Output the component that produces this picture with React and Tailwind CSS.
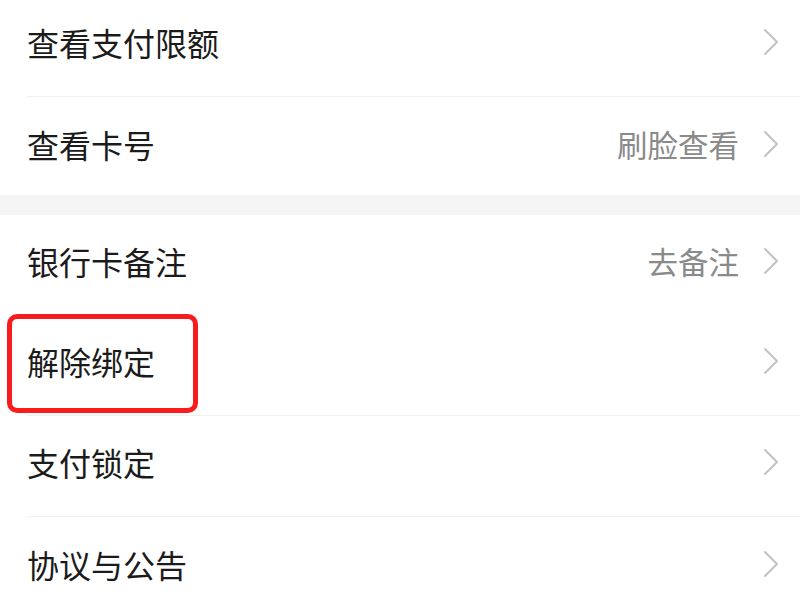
import React from "react";

const Chevron = () => (
  <svg width="18" height="28" viewBox="0 0 18 28" fill="none" className="shrink-0">
    <path d="M3 2 L15 14 L3 26" stroke="#c2c2c2" strokeWidth="2" strokeLinecap="round" strokeLinejoin="round" />
  </svg>
);

const Row = ({ label, value, border = true, highlight = false, className = "h-[101px]" }) => (
  <div className={`relative flex flex-col ${className}`}>
    <div className="flex-1 flex items-center pl-[27px] pr-[20px] pb-[8px]">
      <span className="text-[32px] leading-none text-[#1b1b1b] flex-1">{label}</span>
      {value && <span className="text-[30.5px] leading-none text-[#8a8a8a] mr-[23px]">{value}</span>}
      <Chevron />
    </div>
    {border && <div className="h-px bg-[#efefef] ml-[27px]" />}
    {highlight && (
      <div className="absolute left-[7px] top-[-1px] w-[191px] h-[99px] border-[5px] border-[#fa1c1c] rounded-[10px]" />
    )}
  </div>
);

export default function App() {
  return (
    <div
      className="w-[800px] h-[600px] overflow-hidden bg-white"
      style={{ fontFamily: '"Noto Sans CJK SC", "Noto Sans", sans-serif' }}
    >
      <div className="-mt-[4px]">
        <Row label="查看支付限额" />
        <Row label="查看卡号" value="刷脸查看" border={false} className="pt-[4px] h-[98px]" />
        <div className="h-[20px] bg-[#f5f5f5]" />
        <Row label="银行卡备注" value="去备注" border={false} className="h-[100px]" />
        <Row label="解除绑定" highlight />
        <Row label="支付锁定" />
        <Row label="协议与公告" border={false} />
      </div>
    </div>
  );
}
